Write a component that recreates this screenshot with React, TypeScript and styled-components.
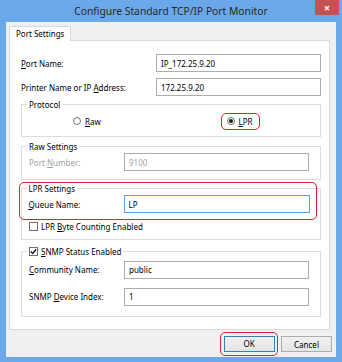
import React from 'react'
import styled, { createGlobalStyle } from 'styled-components'

const GlobalStyle = createGlobalStyle`
  html, body {
    margin: 0;
    padding: 0;
    background: #ffffff;
  }
  * {
    box-sizing: border-box;
  }
`

const Window = styled.div`
  width: 342px;
  height: 362px;
  display: flex;
  flex-direction: column;
  background: #6ba8ea;
  font-family: 'Noto Sans', 'Open Sans', sans-serif;
  font-size: 8px;
  color: #000;
`

const TitleBar = styled.div`
  height: 22px;
  display: grid;
  grid-template-columns: 1fr auto 1fr;
  align-items: start;
`

const Title = styled.div`
  grid-column: 2;
  line-height: 22px;
  font-size: 10.3px;
  color: #2a2a2a;
`

const CloseButton = styled.div`
  grid-column: 3;
  justify-self: end;
  width: 24px;
  height: 15px;
  margin-right: 3px;
  background: #c75050;
  color: #fff;
  display: flex;
  align-items: center;
  justify-content: center;
  font-size: 11px;
  font-weight: bold;
  line-height: 1;
`

const Body = styled.div`
  flex: 1;
  margin: 0 6px 5px 6px;
  background: #f0f0f0;
  padding: 4px 6px 5px 3px;
  display: flex;
  flex-direction: column;
`

const TabStrip = styled.div`
  display: flex;
  height: 14px;
`

const Tab = styled.div`
  background: #fff;
  border: 1px solid #d9d9d9;
  border-bottom: none;
  padding: 0 6px;
  line-height: 13px;
  margin-bottom: -1px;
  position: relative;
  z-index: 1;
`

const Panel = styled.div`
  background: #fff;
  border: 1px solid #d9d9d9;
  height: 290px;
  padding: 13px 8px 11px 11px;
  display: flex;
  flex-direction: column;
`

const Row = styled.div<{ $labelWidth: number; $gap?: number }>`
  display: grid;
  grid-template-columns: ${p => p.$labelWidth}px 1fr;
  align-items: center;
  margin-top: ${p => p.$gap ?? 0}px;
`

const Label = styled.span<{ $disabled?: boolean }>`
  color: ${p => (p.$disabled ? '#a0a0a0' : '#000')};
  white-space: nowrap;
`

const Key = styled.span`
  text-decoration: underline;
`

const Input = styled.div<{ $focused?: boolean; $disabled?: boolean }>`
  height: 18px;
  border: 1px solid ${p => (p.$focused ? '#5a9fe0' : '#abadb3')};
  background: #fff;
  color: ${p => (p.$disabled ? '#a0a0a0' : '#000')};
  padding-left: 4px;
  display: flex;
  align-items: center;
`

const Group = styled.div<{ $gap: number; $pad: number }>`
  border: 1px solid #dcdcdc;
  margin-top: ${p => p.$gap}px;
  padding: 0 11px ${p => p.$pad}px 7px;
`

const GroupTitle = styled.div<{ $inset?: boolean }>`
  height: 12px;
  line-height: 12px;
  margin-top: ${p => (p.$inset ? 0 : -6)}px;
  margin-left: -2px;
  padding: 0 2px;
  background: #fff;
  width: fit-content;
  display: flex;
  align-items: center;
  gap: 3px;
`

const RadioRow = styled.div`
  display: grid;
  grid-template-columns: 154px auto;
  justify-items: start;
  padding-left: 44px;
  margin-top: 4px;
  height: 12px;
  align-items: center;
`

const Option = styled.div`
  display: flex;
  align-items: center;
  gap: 4px;
`

const Radio = styled.span<{ $checked?: boolean }>`
  width: 8px;
  height: 8px;
  border-radius: 50%;
  border: 1px solid #707070;
  background: #fff;
  display: flex;
  align-items: center;
  justify-content: center;

  &::after {
    content: '';
    width: 4px;
    height: 4px;
    border-radius: 50%;
    background: ${p => (p.$checked ? '#1a1a1a' : 'transparent')};
  }
`

const Check = styled.span`
  width: 9px;
  height: 9px;
  border: 1px solid #707070;
  background: #fff;
  display: flex;
  align-items: center;
  justify-content: center;
`

const CheckRow = styled.div`
  display: flex;
  align-items: center;
  gap: 3px;
  height: 12px;
  margin-top: 1px;
`

const Callout = styled.div<{ $m: string; $p: string }>`
  border: 1.5px solid #e0202c;
  border-radius: 5px;
  margin: ${p => p.$m};
  padding: ${p => p.$p};
`

const Footer = styled.div`
  display: flex;
  justify-content: flex-end;
  gap: 7px;
  margin-top: 6px;
  margin-right: -2px;
`

const Button = styled.div<{ $default?: boolean }>`
  width: 51px;
  height: 16px;
  border: 1px solid ${p => (p.$default ? '#3c7fb1' : '#acacac')};
  background: linear-gradient(#f0f0f0, #e5e5e5);
  display: flex;
  align-items: center;
  justify-content: center;
`

const Tick = () => (
  <svg width="7" height="7" viewBox="0 0 7 7">
    <path d="M0.8 3.6 L2.7 5.5 L6.2 1.2" fill="none" stroke="#1a1a1a" strokeWidth="1.4" />
  </svg>
)

export default function App() {
  return (
    <>
      <GlobalStyle />
      <Window>
        <TitleBar>
          <Title>Configure Standard TCP/IP Port Monitor</Title>
          <CloseButton>×</CloseButton>
        </TitleBar>
        <Body>
          <TabStrip>
            <Tab>Port Settings</Tab>
          </TabStrip>
          <Panel>
            <Row $labelWidth={135}>
              <Label>
                <Key>P</Key>ort Name:
              </Label>
              <Input>IP_172.25.9.20</Input>
            </Row>
            <Row $labelWidth={135} $gap={6}>
              <Label>
                Printer Name or IP <Key>A</Key>ddress:
              </Label>
              <Input>172.25.9.20</Input>
            </Row>

            <Group $gap={8} $pad={9}>
              <GroupTitle>Protocol</GroupTitle>
              <RadioRow>
                <Option>
                  <Radio />
                  <span>
                    <Key>R</Key>aw
                  </span>
                </Option>
                <Callout $m="-4px 0 -4px -6px" $p="2px 6px 2px 4.5px">
                  <Option>
                    <Radio $checked />
                    <span>
                      <Key>L</Key>PR
                    </span>
                  </Option>
                </Callout>
              </RadioRow>
            </Group>

            <Group $gap={9} $pad={8}>
              <GroupTitle>Raw Settings</GroupTitle>
              <Row $labelWidth={95}>
                <Label $disabled>
                  Port <Key>N</Key>umber:
                </Label>
                <Input $disabled>9100</Input>
              </Row>
            </Group>

            <Group $gap={8} $pad={6}>
              <Callout $m="-7px -8px 0 -10px" $p="0 6.5px 5.5px 8.5px">
                <GroupTitle $inset>LPR Settings</GroupTitle>
                <Row $labelWidth={95}>
                  <Label>
                    <Key>Q</Key>ueue Name:
                  </Label>
                  <Input $focused>LP</Input>
                </Row>
              </Callout>
              <CheckRow>
                <Check />
                <span>
                  LPR <Key>B</Key>yte Counting Enabled
                </span>
              </CheckRow>
            </Group>

            <Group $gap={11} $pad={10}>
              <GroupTitle>
                <Check>
                  <Tick />
                </Check>
                <span>
                  <Key>S</Key>NMP Status Enabled
                </span>
              </GroupTitle>
              <Row $labelWidth={95} $gap={3}>
                <Label>
                  <Key>C</Key>ommunity Name:
                </Label>
                <Input>public</Input>
              </Row>
              <Row $labelWidth={95} $gap={9}>
                <Label>
                  SNMP <Key>D</Key>evice Index:
                </Label>
                <Input>1</Input>
              </Row>
            </Group>
          </Panel>
          <Footer>
            <Callout $m="-4px -4px -4px -4px" $p="2.5px">
              <Button $default>OK</Button>
            </Callout>
            <Button>Cancel</Button>
          </Footer>
        </Body>
      </Window>
    </>
  )
}
